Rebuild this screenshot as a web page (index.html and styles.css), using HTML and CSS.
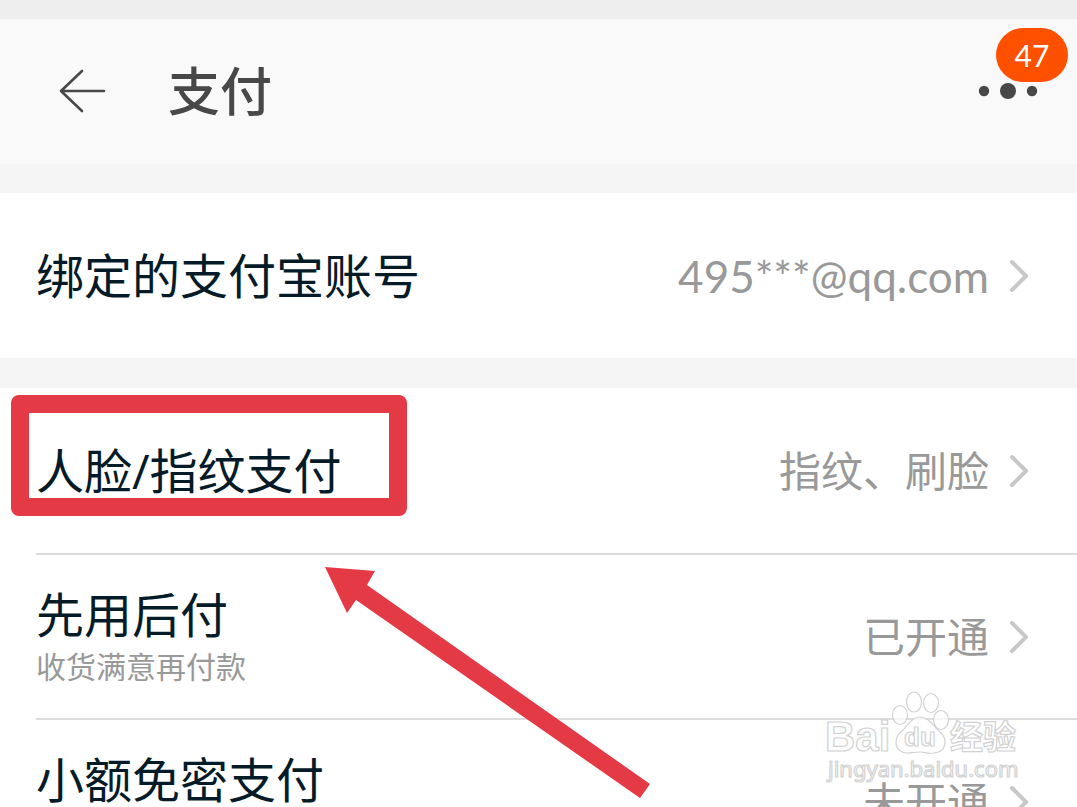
FILE: index.html
```html
<!DOCTYPE html>
<html lang="zh-CN">
<head>
<meta charset="utf-8">
<meta name="viewport" content="width=device-width, initial-scale=1">
<title>支付</title>
<link rel="stylesheet" href="styles.css">
</head>
<body>
<div class="app">
  <header class="header">
    <button class="back" type="button" aria-label="返回">
      <svg width="48" height="46" viewBox="0 0 48 46"><path d="M24 3 3 23l21 20M3 23h43"/></svg>
    </button>
    <h1 class="title">支付</h1>
    <button class="more" type="button" aria-label="更多">
      <svg width="60" height="18" viewBox="0 0 60 18"><circle cx="6" cy="9" r="5.2"/><circle cx="30" cy="9" r="8"/><circle cx="54" cy="9" r="5.2"/></svg>
      <span class="badge">47</span>
    </button>
  </header>
  <main class="groups">
    <section class="group">
      <a class="row" href="#account">
        <span class="label">绑定的支付宝账号</span>
        <span class="value latin">495***@qq.com</span>
        <svg class="chevron" width="20" height="34" viewBox="0 0 20 34"><path d="M3 3l14 14L3 31"/></svg>
      </a>
    </section>
    <section class="group">
      <a class="row" href="#biometric">
        <span class="label">人脸/指纹支付</span>
        <span class="value">指纹、刷脸</span>
        <svg class="chevron" width="20" height="34" viewBox="0 0 20 34"><path d="M3 3l14 14L3 31"/></svg>
      </a>
      <a class="row" href="#paylater">
        <span class="label">先用后付<small class="note">收货满意再付款</small></span>
        <span class="value">已开通</span>
        <svg class="chevron" width="20" height="34" viewBox="0 0 20 34"><path d="M3 3l14 14L3 31"/></svg>
      </a>
      <a class="row" href="#small">
        <span class="label">小额免密支付<small class="note">&nbsp;</small></span>
        <span class="value">未开通</span>
        <svg class="chevron" width="20" height="34" viewBox="0 0 20 34"><path d="M3 3l14 14L3 31"/></svg>
      </a>
      <div class="highlight"></div>
      <svg class="pointer" width="326" height="232" viewBox="0 0 326 232"><path d="M0 0 50 4 42 18 325 217 315 231 31 33 22 46Z"/></svg>
      <svg class="watermark" width="200" height="104" viewBox="0 0 200 104">
        <g class="mark">
          <ellipse cx="76" cy="30" rx="7.5" ry="9.5"/>
          <ellipse cx="90" cy="17" rx="7.5" ry="10"/>
          <ellipse cx="107" cy="18" rx="7.5" ry="9.5"/>
          <ellipse cx="117" cy="35" rx="7.5" ry="9.5"/>
          <path d="M96 32c-8 0-11 7-16 12-5 4-8 7-8 13 0 7 5 11 11 11 5 0 8-1 13-1s8 2 13 1c7 0 12-4 12-11 0-6-4-9-8-13-5-5-9-12-17-12Z"/>
          <text class="bai" x="1" y="66">Bai</text>
          <text class="du" x="80" y="61">du</text>
          <text class="exp" x="126" y="64">经验</text>
          <text class="url" x="4" y="92">jingyan.baidu.com</text>
        </g>
      </svg>
    </section>
  </main>
</div>
</body>
</html>
```
FILE: styles.css
```css
* { box-sizing: border-box; }

body {
  margin: 0;
  font-family: "Open Sans", "Noto Sans CJK SC", sans-serif;
  background: #f5f5f5;
}

.app {
  height: 100vh;
  overflow: hidden;
}

.header {
  display: flex;
  align-items: center;
  height: 164px;
  padding: 0 39px 2px 58px;
  border-top: 19px solid #eee;
  background: #f9f9f9;
}

button {
  display: flex;
  padding: 0;
  border: 0;
  background: none;
}

.back path {
  fill: none;
  stroke: #484848;
  stroke-width: 2.6;
  stroke-linecap: round;
  stroke-linejoin: round;
}

.title {
  flex: 1;
  margin: 0 0 0 62px;
  padding-bottom: 4px;
  font: 500 52px/72px "Noto Sans CJK SC", sans-serif;
  color: #484848;
}

.more {
  position: relative;
  fill: #484848;
}

.badge {
  position: absolute;
  right: -30px;
  bottom: 18px;
  width: 72px;
  border-radius: 27px;
  background: #ff5000;
  color: #fff;
  font: 30px/54px Lato, sans-serif;
  text-align: center;
}

.groups {
  display: flex;
  flex-direction: column;
  gap: 30px;
  padding-top: 29px;
}

.group {
  position: relative;
  background: #fff;
}

.row {
  display: flex;
  align-items: center;
  height: 165px;
  margin-left: 36px;
  padding-right: 48px;
  color: #051b28;
  text-decoration: none;
}

.row + .row { border-top: 2px solid #dcdcdc; }

.label {
  flex: 1;
  font-size: 48px;
  line-height: 60px;
}

.note {
  display: block;
  font-size: 30px;
  line-height: 44px;
  color: #999;
}

.value {
  margin-right: 20px;
  font-size: 42px;
  line-height: 60px;
  color: #999;
}

.latin { font-family: Lato, sans-serif; font-size: 44px; }

.chevron {
  fill: none;
  stroke: #c8c8c8;
  stroke-width: 4;
  stroke-linecap: round;
  stroke-linejoin: round;
}

.highlight {
  position: absolute;
  top: 7px;
  left: 11px;
  width: 396px;
  height: 121px;
  border: 18px solid #e33a45;
  border-radius: 8px;
}

.pointer {
  position: absolute;
  top: 179px;
  left: 325px;
  fill: #e33a45;
}

.watermark {
  position: absolute;
  top: 297px;
  right: 53px;
}

.mark {
  fill: #fff;
  fill-opacity: 0.7;
  stroke: #d2d2d2;
  stroke-width: 1.2;
}

.bai { font: 700 42px "Liberation Sans", sans-serif; }
.du { font: 700 26px "Liberation Sans", sans-serif; }
.exp { font: 700 33px "Noto Sans CJK SC", sans-serif; }
.url { font: 22px "Noto Sans", sans-serif; }
```
